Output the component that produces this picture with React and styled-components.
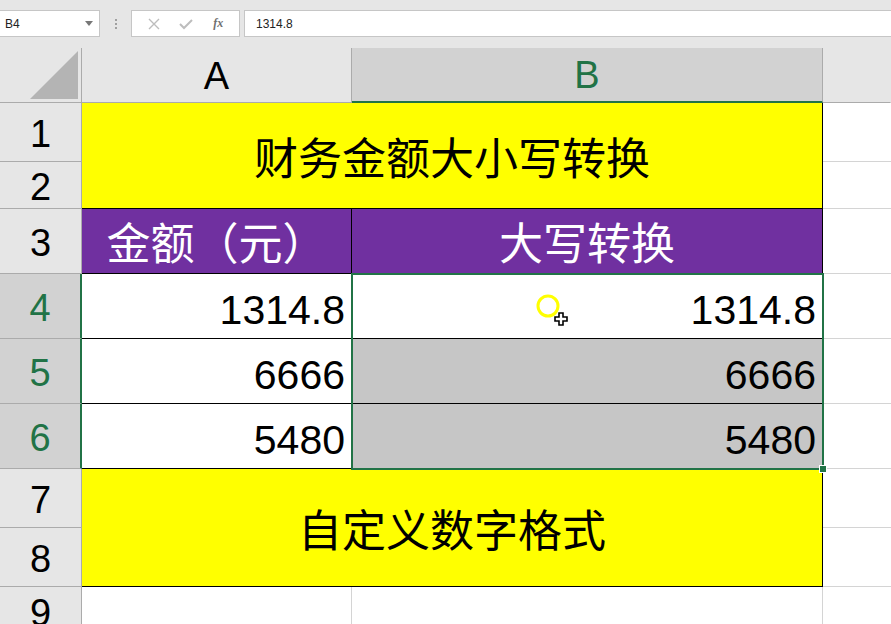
import React from "react";
import styled, { createGlobalStyle } from "styled-components";

const GlobalStyle = createGlobalStyle`
    html, body {
        margin: 0;
        padding: 0;
        background: #ffffff;
        overflow: hidden;
    }
    #root {
        width: 891px;
        height: 624px;
    }
`;

const GREEN = "#217346";
const GRID = "#d4d4d4";

const Page = styled.div`
    width: 891px;
    height: 624px;
    display: flex;
    flex-direction: column;
    overflow: hidden;
    font-family: "Liberation Sans", Arial, sans-serif;
`;

const Toolbar = styled.div`
    height: 48px;
    flex-shrink: 0;
    background: #e6e6e6;
    display: flex;
    align-items: flex-start;
    padding-top: 10px;
    box-sizing: border-box;
`;

const NameBox = styled.div`
    width: 100px;
    height: 27px;
    box-sizing: border-box;
    background: #fff;
    border: 1px solid #c6c6c6;
    border-left: none;
    display: flex;
    align-items: center;
    justify-content: space-between;
    padding: 0 6px 0 5px;
    font-size: 12px;
    color: #222;
`;

const Caret = styled.span`
    width: 0;
    height: 0;
    border-left: 4px solid transparent;
    border-right: 4px solid transparent;
    border-top: 5px solid #777;
`;

const Dots = styled.div`
    width: 31px;
    height: 27px;
    display: flex;
    flex-direction: column;
    align-items: center;
    justify-content: center;
    gap: 2px;
    span {
        width: 2px;
        height: 2px;
        background: #a0a0a0;
    }
`;

const ButtonGroup = styled.div`
    width: 109px;
    height: 27px;
    box-sizing: border-box;
    background: #fff;
    border: 1px solid #c6c6c6;
    display: flex;
    align-items: center;
    justify-content: space-around;
    padding: 0 6px;
`;

const Fx = styled.span`
    font-family: "Liberation Serif", serif;
    font-style: italic;
    font-weight: bold;
    font-size: 12px;
    color: #707070;
`;

const Formula = styled.div`
    flex: 1;
    height: 27px;
    margin-left: 4px;
    box-sizing: border-box;
    background: #fff;
    border: 1px solid #c6c6c6;
    border-right: none;
    display: flex;
    align-items: center;
    padding-left: 11px;
    font-size: 12px;
    color: #222;
`;

const Sheet = styled.div`
    flex: 1;
    display: grid;
    grid-template-columns: 82px 270px 471px 1fr;
    grid-template-rows: 55px 59px 47px 65px 65px 65px 65px 59px 59px 1fr;
    background: #fff;
`;

const Corner = styled.div`
    grid-column: 1;
    grid-row: 1;
    background: #e6e6e6;
    border-right: 1px solid #ababab;
    border-bottom: 1px solid #ababab;
    display: flex;
    align-items: flex-end;
    justify-content: flex-end;
    padding: 0 3px 3px 0;
`;

const ColHead = styled.div`
    grid-column: ${(p) => p.$col};
    grid-row: 1;
    background: ${(p) => (p.$active ? "#d2d2d2" : "#e6e6e6")};
    color: ${(p) => (p.$active ? GREEN : "#000")};
    border-right: 1px solid ${(p) => (p.$last ? "transparent" : "#ababab")};
    border-bottom: ${(p) => (p.$active ? `2px solid ${GREEN}` : "1px solid #ababab")};
    display: flex;
    align-items: center;
    justify-content: center;
    padding-top: 2px;
    font-size: 38px;
    box-sizing: border-box;
`;

const RowHead = styled.div`
    grid-column: 1;
    grid-row: ${(p) => p.$row};
    background: ${(p) => (p.$active ? "#d2d2d2" : "#e6e6e6")};
    color: ${(p) => (p.$active ? GREEN : "#000")};
    border-bottom: 1px solid #ababab;
    border-right: ${(p) => (p.$active ? `2px solid ${GREEN}` : "1px solid #ababab")};
    display: flex;
    align-items: center;
    justify-content: center;
    padding-top: 5px;
    font-size: 38px;
    box-sizing: border-box;
`;

const Cell = styled.div`
    grid-column: ${(p) => p.$col};
    grid-row: ${(p) => p.$row};
    background: ${(p) => p.$bg || "#fff"};
    color: ${(p) => p.$color || "#000"};
    border-right: 1px solid #000;
    border-bottom: 1px solid #000;
    box-sizing: border-box;
    display: flex;
    align-items: center;
    justify-content: ${(p) => (p.$right ? "flex-end" : "center")};
    padding-right: ${(p) => (p.$right ? "6px" : "0")};
    padding-top: ${(p) => (p.$right ? "8px" : "0")};
    font-size: ${(p) => p.$size || 41}px;
    font-family: ${(p) =>
        p.$cjk
            ? `"Noto Sans CJK SC", sans-serif`
            : `"Liberation Sans", Arial, sans-serif`};
    position: relative;
`;

const GridCell = styled.div`
    grid-column: 4;
    grid-row: ${(p) => p.$row};
    border-bottom: 1px solid ${GRID};
    background: #fff;
`;

const BlankCell = styled.div`
    grid-column: ${(p) => p.$col};
    grid-row: 10;
    border-right: 1px solid ${GRID};
`;

const Selection = styled.div`
    grid-column: 3;
    grid-row: 5 / span 3;
    border: 2px solid ${GREEN};
    margin: -1px;
    position: relative;
    pointer-events: none;
    z-index: 2;
`;

const Handle = styled.div`
    position: absolute;
    right: -5px;
    bottom: -5px;
    width: 6px;
    height: 6px;
    background: ${GREEN};
    border: 1px solid #fff;
`;

const Cursor = styled.svg`
    position: absolute;
    left: 196px;
    top: 32px;
    overflow: visible;
`;

export default function App() {
    const rows = [1, 2, 3, 4, 5, 6, 7, 8, 9];
    return (
        <Page>
            <GlobalStyle />
            <Toolbar>
                <NameBox>
                    B4
                    <Caret />
                </NameBox>
                <Dots>
                    <span />
                    <span />
                    <span />
                </Dots>
                <ButtonGroup>
                    <svg width="12" height="12" viewBox="0 0 12 12">
                        <path d="M1 1 L11 11 M11 1 L1 11" stroke="#bdbdbd" strokeWidth="1.4" />
                    </svg>
                    <svg width="14" height="12" viewBox="0 0 14 12">
                        <path d="M1 6 L5 10 L13 2" stroke="#bdbdbd" strokeWidth="2" fill="none" />
                    </svg>
                    <Fx>fx</Fx>
                </ButtonGroup>
                <Formula>1314.8</Formula>
            </Toolbar>
            <Sheet>
                <Corner>
                    <svg width="48" height="48" viewBox="0 0 48 48">
                        <polygon points="48,0 48,48 0,48" fill="#b4b4b4" />
                    </svg>
                </Corner>
                <ColHead $col={2}>A</ColHead>
                <ColHead $col={3} $active>
                    B
                </ColHead>
                <ColHead $col={4} $last />

                {rows.map((r) => (
                    <RowHead key={r} $row={r + 1} $active={r >= 4 && r <= 6}>
                        {r}
                    </RowHead>
                ))}

                <Cell $col="2 / span 2" $row="2 / span 2" $bg="#ffff00" $cjk $size={44}>
                    财务金额大小写转换
                </Cell>
                <Cell $col={2} $row={4} $bg="#7030a0" $color="#fff" $cjk $size={44}>
                    金额（元）
                </Cell>
                <Cell $col={3} $row={4} $bg="#7030a0" $color="#fff" $cjk $size={44}>
                    大写转换
                </Cell>

                <Cell $col={2} $row={5} $right>
                    1314.8
                </Cell>
                <Cell $col={3} $row={5} $right>
                    <Cursor width="30" height="30">
                        <circle cx="0" cy="0" r="10" fill="none" stroke="#ffff00" strokeWidth="3" />
                        <path
                            d="M11 7 h4 v4 h4 v4 h-4 v4 h-4 v-4 h-4 v-4 h4 z"
                            fill="#fff"
                            stroke="#000"
                            strokeWidth="1.6"
                        />
                    </Cursor>
                    1314.8
                </Cell>
                <Cell $col={2} $row={6} $right>
                    6666
                </Cell>
                <Cell $col={3} $row={6} $right $bg="#c6c6c6">
                    6666
                </Cell>
                <Cell $col={2} $row={7} $right>
                    5480
                </Cell>
                <Cell $col={3} $row={7} $right $bg="#c6c6c6">
                    5480
                </Cell>
                <Selection>
                    <Handle />
                </Selection>

                <Cell $col="2 / span 2" $row="8 / span 2" $bg="#ffff00" $cjk $size={44}>
                    自定义数字格式
                </Cell>

                {rows.slice(0, 8).map((r) => (
                    <GridCell key={r} $row={r + 1} />
                ))}
                <BlankCell $col={2} />
                <BlankCell $col={3} />
            </Sheet>
        </Page>
    );
}
